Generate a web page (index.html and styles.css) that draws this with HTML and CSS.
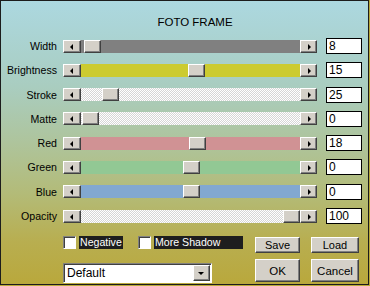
FILE: index.html
```html
<!DOCTYPE html>
<html lang="en">
<head>
  <meta charset="UTF-8">
  <title>Foto Frame</title>
  <link rel="stylesheet" href="styles.css">
</head>
<body>
  <div class="frame">
    <h1 class="title">FOTO FRAME</h1>

    <div class="rows">
      <div class="row">
        <span class="label">Width</span>
        <div class="scroll">
          <span class="arrow left"></span>
          <div class="track track-gray"><span class="thumb" style="left: 3px"></span></div>
          <span class="arrow right"></span>
        </div>
        <div class="value">8</div>
      </div>
      <div class="row">
        <span class="label">Brightness</span>
        <div class="scroll">
          <span class="arrow left"></span>
          <div class="track track-yellow"><span class="thumb" style="left: 107px"></span></div>
          <span class="arrow right"></span>
        </div>
        <div class="value">15</div>
      </div>
      <div class="row">
        <span class="label">Stroke</span>
        <div class="scroll">
          <span class="arrow left"></span>
          <div class="track track-dots"><span class="thumb" style="left: 21px"></span></div>
          <span class="arrow right"></span>
        </div>
        <div class="value">25</div>
      </div>
      <div class="row">
        <span class="label">Matte</span>
        <div class="scroll">
          <span class="arrow left"></span>
          <div class="track track-dots"><span class="thumb" style="left: 1px"></span></div>
          <span class="arrow right"></span>
        </div>
        <div class="value">0</div>
      </div>
      <div class="row">
        <span class="label">Red</span>
        <div class="scroll">
          <span class="arrow left"></span>
          <div class="track track-red"><span class="thumb" style="left: 108px"></span></div>
          <span class="arrow right"></span>
        </div>
        <div class="value">18</div>
      </div>
      <div class="row">
        <span class="label">Green</span>
        <div class="scroll">
          <span class="arrow left"></span>
          <div class="track track-green"><span class="thumb" style="left: 102px"></span></div>
          <span class="arrow right"></span>
        </div>
        <div class="value">0</div>
      </div>
      <div class="row">
        <span class="label">Blue</span>
        <div class="scroll">
          <span class="arrow left"></span>
          <div class="track track-blue"><span class="thumb" style="left: 102px"></span></div>
          <span class="arrow right"></span>
        </div>
        <div class="value">0</div>
      </div>
      <div class="row">
        <span class="label">Opacity</span>
        <div class="scroll">
          <span class="arrow left"></span>
          <div class="track track-dots"><span class="thumb" style="left: 202px"></span></div>
          <span class="arrow right"></span>
        </div>
        <div class="value">100</div>
      </div>
    </div>

    <div class="bottom">
      <div class="checks">
        <span class="box"></span>
        <span class="check-label">Negative</span>
        <span class="box box-second"></span>
        <span class="check-label check-wide">More Shadow</span>
      </div>
      <button class="btn btn-small">Save</button>
      <button class="btn btn-small">Load</button>
      <div class="combo">
        <span class="combo-text">Default</span>
        <span class="combo-arrow"></span>
      </div>
      <button class="btn btn-big">OK</button>
      <button class="btn btn-big">Cancel</button>
    </div>
  </div>
</body>
</html>
```

FILE: styles.css
```css
html {
  background: #b8a838;
}
body {
  margin: 0;
  font-family: 'Liberation Sans', Arial, sans-serif;
  font-size: 11px;
  color: #000;
}
.frame {
  box-sizing: border-box;
  width: 369px;
  height: 285px;
  border: 1px solid #1c1c1c;
  padding-top: 14px;
  background: linear-gradient(to bottom, #acd8e0 0%, #a9cdc0 30%, #aec49c 50%, #b3bb78 68%, #b8ae50 85%, #b9a83c 100%);
}
.title {
  margin: 0 0 9px;
  padding-left: 21px;
  font-size: 11.5px;
  font-weight: normal;
  line-height: 14px;
  text-align: center;
}
.rows {
  display: flex;
  flex-direction: column;
  gap: 8.3px;
}
.row {
  display: flex;
  align-items: center;
  height: 16px;
}
.label {
  width: 56px;
  margin-right: 6px;
  text-align: right;
  font-size: 10.6px;
}
.scroll {
  display: flex;
  width: 254px;
  height: 13px;
}
.arrow, .thumb {
  box-sizing: border-box;
  height: 13px;
  background: #d4d0c8;
  border-top: 1px solid #fff;
  border-left: 1px solid #fff;
  border-right: 1px solid #404040;
  border-bottom: 1px solid #404040;
  box-shadow: inset -1px -1px 0 #808080;
}
.arrow {
  position: relative;
  width: 18px;
  flex: none;
}
.arrow.right {
  width: 17px;
}
.arrow::before {
  content: "";
  position: absolute;
  top: 3px;
  width: 0;
  height: 0;
  border-top: 3px solid transparent;
  border-bottom: 3px solid transparent;
}
.arrow.left::before {
  left: 6px;
  border-right: 3px solid #000;
}
.arrow.right::before {
  left: 7px;
  border-left: 3px solid #000;
}
.track {
  position: relative;
  flex: 1;
}
.thumb {
  position: absolute;
  top: 0;
  width: 17px;
}
.track-gray { background: #808080; }
.track-yellow { background: #cccb30; }
.track-red { background: #d09294; }
.track-green { background: #92c894; }
.track-blue { background: #82a8d0; }
.track-dots {
  background: repeating-conic-gradient(#fff 0 25%, #d6d6d6 0 50%) 0 0 / 2px 2px;
}
.value {
  box-sizing: border-box;
  width: 36px;
  height: 16px;
  margin-left: 9px;
  padding-left: 2px;
  background: #fff;
  border: 1px solid #000;
  font-size: 12px;
  line-height: 14px;
}
.bottom {
  display: grid;
  grid-template-columns: 180px 46px 48px;
  grid-template-rows: 17px 23px;
  column-gap: 11px;
  row-gap: 6px;
  margin-top: 12px;
  margin-left: 62px;
}
.bottom .btn:nth-child(2) {
  margin-left: 1px;
}
.bottom .btn:nth-child(5) {
  margin-left: 1px;
}
.checks {
  display: flex;
  align-items: flex-start;
}
.box {
  box-sizing: border-box;
  width: 13px;
  height: 13px;
  background: #fff;
  border-top: 1px solid #808080;
  border-left: 1px solid #808080;
  border-right: 1px solid #fff;
  border-bottom: 1px solid #fff;
  box-shadow: inset 1px 1px 0 #404040;
}
.box-second {
  margin-left: 15px;
}
.check-label {
  width: 44px;
  height: 13px;
  margin-left: 3px;
  padding-left: 1px;
  box-sizing: border-box;
  background: #1e1e1e;
  color: #fff;
  font-size: 10.6px;
  line-height: 13px;
}
.check-wide {
  width: 89px;
}
.btn {
  box-sizing: border-box;
  margin: 0;
  padding: 0;
  font-family: inherit;
  font-size: 11px;
  color: #000;
  background: #d4d0c8;
  border-top: 1px solid #fff;
  border-left: 1px solid #fff;
  border-right: 1px solid #404040;
  border-bottom: 1px solid #404040;
  box-shadow: inset -1px -1px 0 #808080;
}
.btn-small {
  height: 16px;
  align-self: end;
  line-height: 14px;
}
.btn-big {
  height: 23px;
  font-size: 11.5px;
}
.combo {
  box-sizing: border-box;
  display: flex;
  align-items: center;
  width: 149px;
  height: 20px;
  margin-top: 4px;
  background: #fff;
  border-top: 1px solid #808080;
  border-left: 1px solid #808080;
  border-right: 1px solid #fff;
  border-bottom: 1px solid #fff;
  box-shadow: inset 1px 1px 0 #404040;
}
.combo-text {
  flex: 1;
  padding-left: 3px;
  font-size: 12px;
}
.combo-arrow {
  position: relative;
  box-sizing: border-box;
  width: 17px;
  height: 16px;
  margin-right: 1px;
  background: #d4d0c8;
  border-top: 1px solid #fff;
  border-left: 1px solid #fff;
  border-right: 1px solid #404040;
  border-bottom: 1px solid #404040;
  box-shadow: inset -1px -1px 0 #808080;
}
.combo-arrow::before {
  content: "";
  position: absolute;
  top: 6px;
  left: 4px;
  border-left: 3px solid transparent;
  border-right: 3px solid transparent;
  border-top: 3px solid #000;
}
```
